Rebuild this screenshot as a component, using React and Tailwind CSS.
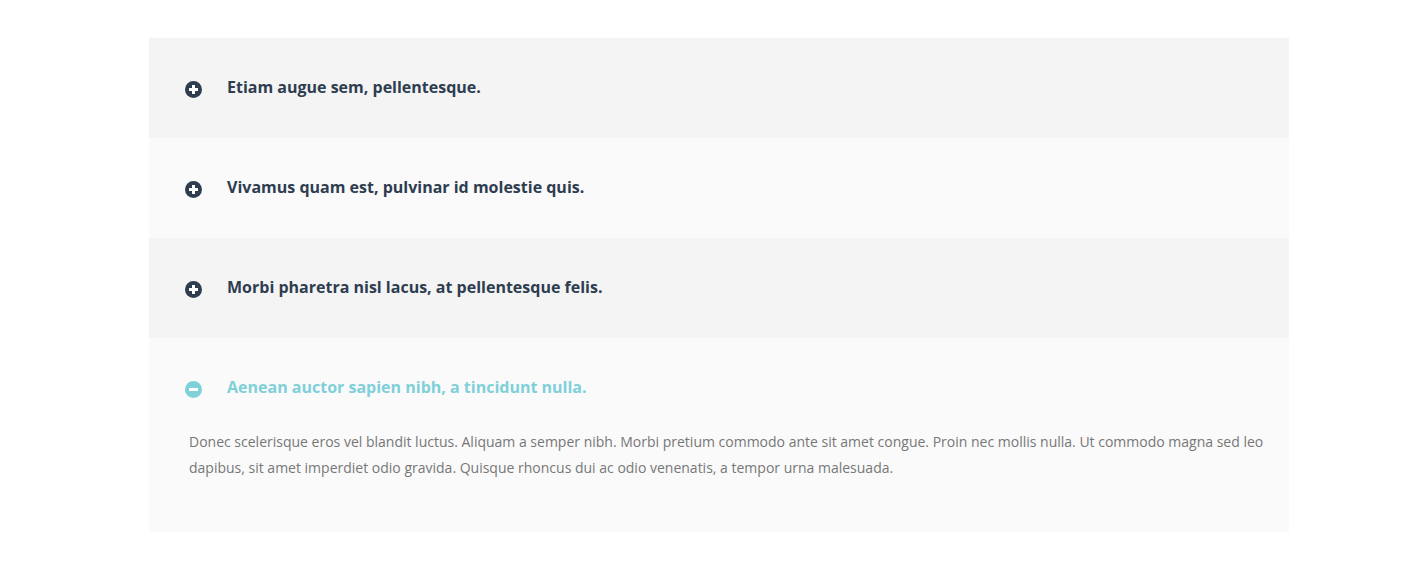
import React from "react";

function PlusIcon() {
  return (
    <svg width="17" height="17" viewBox="0 0 17 17" className="shrink-0 translate-y-[2px]">
      <circle cx="8.5" cy="8.5" r="8.5" fill="#2e3d50" />
      <rect x="4" y="7" width="9" height="3" fill="#ffffff" />
      <rect x="7" y="4" width="3" height="9" fill="#ffffff" />
    </svg>
  );
}

function MinusIcon() {
  return (
    <svg width="17" height="17" viewBox="0 0 17 17" className="shrink-0 translate-y-[2px]">
      <circle cx="8.5" cy="8.5" r="8.5" fill="#7fd0d9" />
      <rect x="4" y="7" width="9" height="3" fill="#ffffff" />
    </svg>
  );
}

const items = [
  { title: "Etiam augue sem, pellentesque.", bg: "bg-[#f4f4f4]" },
  { title: "Vivamus quam est, pulvinar id molestie quis.", bg: "bg-[#fafafa]" },
  { title: "Morbi pharetra nisl lacus, at pellentesque felis.", bg: "bg-[#f4f4f4]" },
];

export default function App() {
  return (
    <div
      className="min-h-[574px] bg-white pt-[38px]"
      style={{ fontFamily: '"Open Sans", "Noto Sans", sans-serif' }}
    >
      <div className="w-[1140px] ml-[149px]">
        {items.map((it) => (
          <div key={it.title} className={`${it.bg} h-[100px] flex items-center pl-9`}>
            <div className="flex items-center gap-[25px] -mt-[2px]">
              <PlusIcon />
              <span className="text-[16px] leading-6 font-bold text-[#2e3d50]">{it.title}</span>
            </div>
          </div>
        ))}
        <div className="bg-[#fafafa] pt-[37px] pb-[51px]">
          <div className="flex items-center gap-[25px] pl-9">
            <MinusIcon />
            <span className="text-[16px] leading-6 font-bold text-[#7fd0d9]">
              Aenean auctor sapien nibh, a tincidunt nulla.
            </span>
          </div>
          <p className="mt-[30px] pl-10 pr-6 text-[14px] leading-[26px] text-[#777777]">
            Donec scelerisque eros vel blandit luctus. Aliquam a semper nibh. Morbi pretium commodo ante sit amet congue. Proin nec mollis nulla. Ut commodo magna sed leo dapibus, sit amet imperdiet odio gravida. Quisque rhoncus dui ac odio venenatis, a tempor urna malesuada.
          </p>
        </div>
      </div>
    </div>
  );
}
